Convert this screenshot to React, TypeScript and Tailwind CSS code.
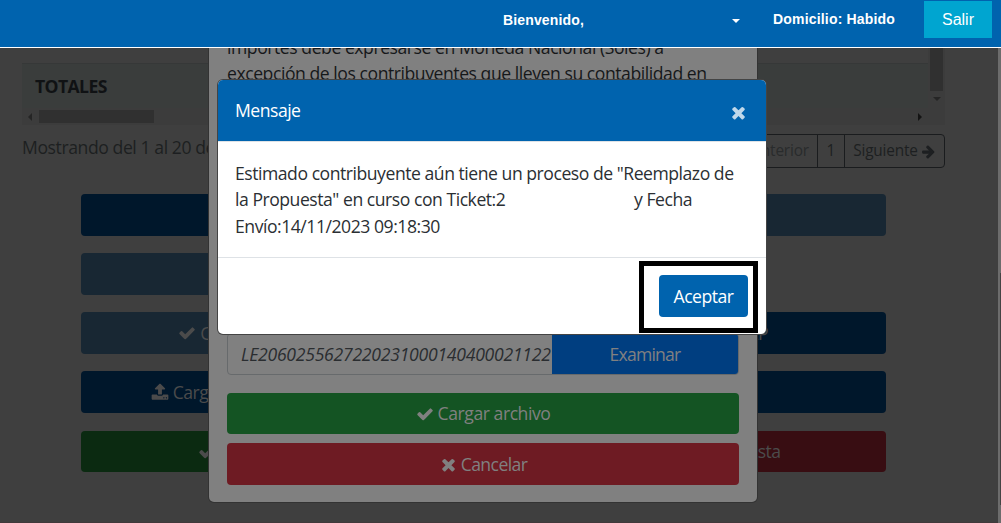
import React from "react";
import { clsx } from "clsx";

const paths = {
  check:
    "M1671 566q0 40-28 68l-724 724-136 136q-28 28-68 28t-68-28l-136-136-362-362q-28-28-28-68t28-68l136-136q28-28 68-28t68 28l294 295 656-657q28-28 68-28t68 28l136 136q28 28 28 68z",
  times:
    "M1490 1322q0 40-28 68l-136 136q-28 28-68 28t-68-28l-294-294-294 294q-28 28-68 28t-68-28l-136-136q-28-28-28-68t28-68l294-294-294-294q-28-28-28-68t28-68l136-136q28-28 68-28t68 28l294 294 294-294q28-28 68-28t68 28l136 136q28 28 28 68t-28 68l-294 294 294 294q28 28 28 68z",
  upload:
    "M1344 1472q0-26-19-45t-45-19-45 19-19 45 19 45 45 19 45-19 19-45zm256 0q0-26-19-45t-45-19-45 19-19 45 19 45 45 19 45-19 19-45zm128-224v320q0 40-28 68t-68 28h-1472q-40 0-68-28t-28-68v-320q0-40 28-68t68-28h427q21 56 70.5 92t110.5 36h256q61 0 110.5-36t70.5-92h427q40 0 68 28t28 68zm-325-648q-17 40-59 40h-256v448q0 26-19 45t-45 19h-256q-26 0-45-19t-19-45v-448h-256q-42 0-59-40-17-39 14-69l448-448q18-19 45-19t45 19l448 448q31 30 14 69z",
  arrow:
    "M1600 960q0 54-37 91l-651 651q-39 37-91 37-51 0-90-37l-75-75q-38-38-38-91t38-91l293-293h-704q-52 0-84.5-37.5t-32.5-90.5v-128q0-53 32.5-90.5t84.5-37.5h704l-293-294q-38-36-38-90t38-90l75-75q38-38 90-38 53 0 91 38l651 651q37 35 37 90z",
};

const Icon = ({
  name,
  className,
}: {
  name: keyof typeof paths;
  className?: string;
}) => (
  <svg
    viewBox="0 0 1792 1792"
    fill="currentColor"
    className={clsx("shrink-0", className)}
  >
    <path d={paths[name]} />
  </svg>
);

const Navbar = () => (
  <header className="relative z-30 flex h-12 items-start justify-end border-b border-white bg-[#0063ae] pr-[9px] font-['Liberation_Sans',Arial,sans-serif] text-white">
    <div className="flex h-10 w-[237px] items-center justify-between">
      <span className="text-[14px] font-bold tracking-[0.15px]">
        Bienvenido,
      </span>
      <span className="mt-[2px] h-0 w-0 border-x-4 border-t-4 border-x-transparent border-t-white" />
    </div>
    <span className="ml-[33px] flex h-[38px] w-[151px] items-center text-[14px] font-bold tracking-[0.18px]">
      Domicilio: Habido
    </span>
    <button className="mt-px h-[37px] w-[68px] bg-[#00a5d0] text-base">
      Salir
    </button>
  </header>
);

const actions: {
  label?: string;
  icon?: "check" | "times" | "upload";
  color: string;
}[][] = [
  [{ color: "bg-[#00172b]" }, { color: "bg-[#182733]" }],
  [{ color: "bg-[#182733]" }],
  [
    { label: "Comparar Propuestas", icon: "check", color: "bg-[#182733]" },
    { label: "Cargar Reporte CLP", color: "bg-[#00172b]" },
  ],
  [
    { label: "Cargar Reemplazo Propuesta", icon: "upload", color: "bg-[#00172b]" },
    { color: "bg-[#00172b]" },
  ],
  [
    { label: "Enviar Propuesta", icon: "check", color: "bg-[#0b2a11]" },
    { label: "Descartar la Propuesta", color: "bg-[#380d12]" },
  ],
];

const Background = () => (
  <main className="h-[475px] border-b border-[#41393a] pl-[22px] pr-[56px] text-[#1d1f21]">
    <div className="flex h-[77px]">
      <div className="flex flex-1 flex-col">
        <div className="mt-[15px] flex h-[45px] items-center border-t border-[#363838] bg-[#3a3d3c] pl-[13px] text-[17.6px] font-bold tracking-[-0.6px] text-[#101214]">
          TOTALES
        </div>
        <div className="flex flex-1 items-center bg-[#3c3c3c] px-[6px]">
          <span className="h-0 w-0 border-y-4 border-r-4 border-y-transparent border-r-[#252525]" />
          <span className="ml-[7px] h-[13px] w-[115px] bg-[#303030]" />
          <span className="ml-auto h-0 w-0 border-y-4 border-l-4 border-y-transparent border-l-[#141414]" />
        </div>
      </div>
      <div className="flex w-[17px] flex-col items-center bg-[#3c3c3c]">
        <span className="h-[43px] w-[13px] bg-[#303030]" />
        <span className="mt-[6px] h-0 w-0 border-x-4 border-t-4 border-x-transparent border-t-[#252525]" />
      </div>
    </div>
    <div className="flex h-[69px] items-start justify-between">
      <p className="mt-[9px] text-[17.6px] leading-[26px] tracking-[-0.42px] whitespace-nowrap">
        Mostrando del 1 al 20 de 20 registros
      </p>
      <div className="mt-[9px] flex h-[34px] rounded border border-[#1a1c1e] text-[15.4px]">
        <span className="flex items-center px-2 tracking-[-0.15px] text-[#292b2c]">
          <Icon name="arrow" className="mr-1 size-4 rotate-180" />
          Anterior
        </span>
        <span className="flex w-7 items-center justify-center border-x border-[#1a1c1e]">
          1
        </span>
        <span className="flex w-[99px] items-center justify-center gap-[3px] tracking-[-0.2px]">
          Siguiente
          <Icon name="arrow" className="size-[15px]" />
        </span>
      </div>
    </div>
    <div className="grid gap-[17px] pl-[59px] pr-[59px]">
      {actions.map((row, idx) => (
        <div key={idx} className="grid grid-cols-2 gap-[31px] last:mt-px">
          {row.map((item, i) => (
            <div
              key={i}
              className={clsx(
                "flex items-center justify-center gap-1 overflow-hidden rounded-[4px] text-[17.6px] tracking-[-0.5px] whitespace-nowrap text-[#4b4b4b]",
                idx === actions.length - 1 ? "h-[41px]" : "h-[42px]",
                item.color
              )}
            >
              {item.icon && <Icon name={item.icon} className="size-[18px]" />}
              {item.label}
            </div>
          ))}
        </div>
      ))}
    </div>
  </main>
);

const UploadModal = () => (
  <section className="absolute top-0 left-[209px] z-10 h-[502px] w-[548px] rounded-[5px] bg-[#808080] px-[18px] pt-[34px] text-[17.6px] text-[#16181a] shadow-[0_0_0_1px_#333]">
    <p className="h-[299px] leading-[26.4px] tracking-[-0.45px] whitespace-nowrap">
      importes debe expresarse en Moneda Nacional (Soles) a
      <br />
      excepción de los contribuyentes que lleven su contabilidad en
    </p>
    <div className="flex h-[42px] w-[512px] overflow-hidden rounded border border-[#676a6c]">
      <span className="flex w-[324px] items-center overflow-hidden pl-[13px] tracking-[-0.25px] text-[#2a2d30] italic">
        LE2060255627220231000140400021122
      </span>
      <span className="flex flex-1 items-center justify-center bg-[#003e80] tracking-[-0.8px] text-[#808080]">
        Examinar
      </span>
    </div>
    <button className="mt-[18px] flex h-[41px] w-full items-center justify-center gap-1 rounded bg-[#145423] tracking-[-0.45px] text-[#808080]">
      <Icon name="check" className="size-[18px]" />
      Cargar archivo
    </button>
    <button className="mt-[9px] flex h-[42px] w-full items-center justify-center gap-[3px] rounded bg-[#6e1b23] tracking-[-0.6px] text-[#808080]">
      <Icon name="times" className="size-[19px]" />
      Cancelar
    </button>
  </section>
);

const MessageModal = () => (
  <section className="absolute top-[80px] left-[218px] z-20 flex h-[254px] w-[548px] flex-col overflow-hidden rounded-[5px] bg-white text-[17.6px] text-[#2b2f33] shadow-[0_0_0_1px_#444]">
    <div className="flex h-[61px] items-center justify-between bg-[#0063ae] pr-[18px] pl-[17px] text-white">
      <span className="tracking-[-0.5px]">Mensaje</span>
      <Icon name="times" className="mt-[3px] size-[19px] text-[#bfd8eb]" />
    </div>
    <div className="flex-1 border-y border-[#dee2e6] pt-[18px] pl-[17px] leading-[26.4px] tracking-[-0.47px] whitespace-nowrap">
      <p>Estimado contribuyente aún tiene un proceso de "Reemplazo de</p>
      <p className="flex">
        <span className="w-[399px]">la Propuesta" en curso con Ticket:2</span>
        <span>y Fecha</span>
      </p>
      <p>Envío:14/11/2023 09:18:30</p>
    </div>
    <div className="flex h-[76px] justify-end pt-[17px] pr-[18px]">
      <button className="h-[42px] w-[89px] rounded bg-[#0063ae] tracking-[-0.5px] text-white">
        Aceptar
      </button>
    </div>
  </section>
);

export default function App() {
  return (
    <div className="relative h-[523px] w-[1001px] overflow-hidden bg-[#3f3f3f] font-['Open_Sans','Noto_Sans',sans-serif]">
      <Navbar />
      <Background />
      <UploadModal />
      <MessageModal />
      {/* highlight around the accept button */}
      <div className="absolute top-[261px] left-[639px] z-20 h-[72px] w-[119px] border-[5px] border-black" />
      {/* page scrollbar */}
      <div className="absolute top-12 right-0 h-[475px] w-[3px] bg-[#6c6c6c]">
        <div className="mt-[225px] ml-[2px] h-[232px] bg-[#444]" />
      </div>
    </div>
  );
}
